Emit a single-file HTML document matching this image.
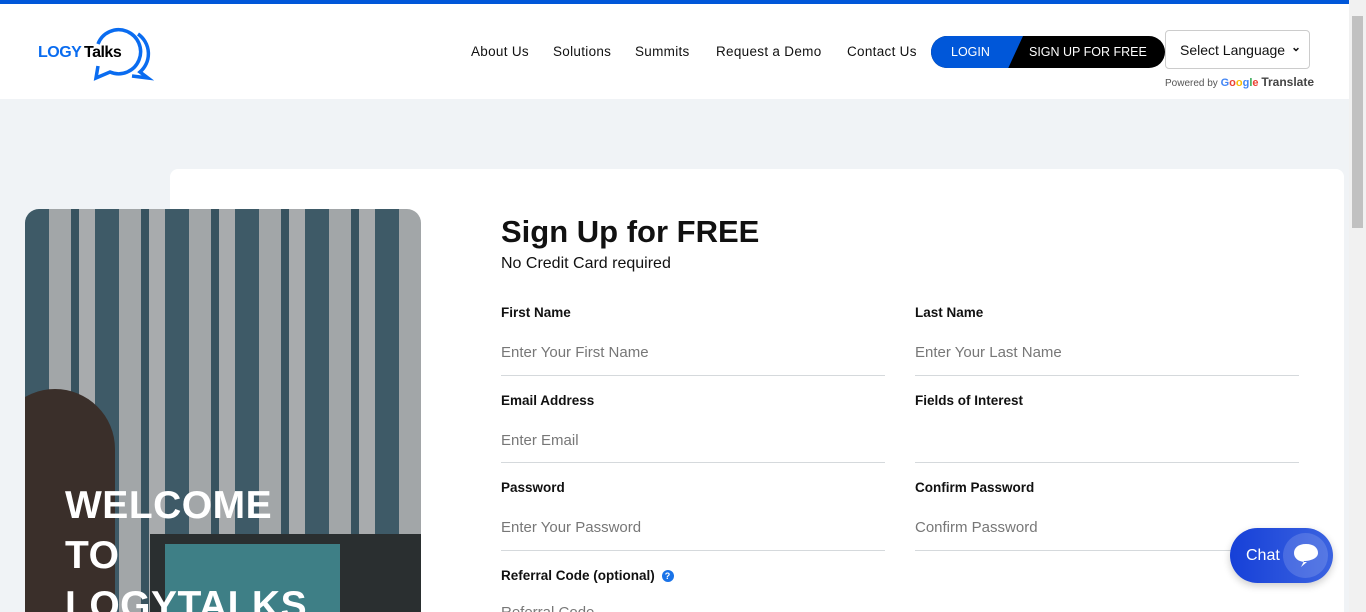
<!DOCTYPE html>
<html><head><meta charset="utf-8"><style>
*{box-sizing:border-box;margin:0;padding:0}
html,body{width:1366px;height:612px;overflow:hidden}
body{background:#f0f3f6;font-family:"Liberation Sans",sans-serif;position:relative}
.top{position:absolute;left:0;top:0;width:1349px;height:4px;background:#0057d9}
header{position:absolute;left:0;top:4px;width:1349px;height:95px;background:#fff}
.scroll{position:absolute;right:0;top:0;width:17px;height:612px;background:#f1f1f1}
.scroll div{position:absolute;left:3px;top:16px;width:11px;height:212px;background:#c1c1c1}
nav a{position:absolute;top:40px;font-size:13.5px;color:#111;text-decoration:none;letter-spacing:.3px}
.btn{position:absolute;left:931px;top:32px;width:234px;height:32px;border-radius:16px;background:#000;overflow:hidden}
.btn .l{position:absolute;left:0;top:0;width:92px;height:32px;background:#0057d9;clip-path:polygon(0 0,100% 0,84% 100%,0 100%)}
.btn span{position:absolute;top:9px;color:#fff;font-size:12.5px}
.sel{position:absolute;left:1165px;top:26px;width:145px;height:39px;border:1px solid #ccc;border-radius:4px;background:#fff;font-size:14px;padding:11px 0 0 14px;color:#111}
.pw{position:absolute;left:1165px;top:71px;font-size:10px;color:#555}
.card{position:absolute;left:170px;top:169px;width:1174px;height:443px;background:#fff;border-radius:8px 8px 0 0}
.img{position:absolute;left:25px;top:209px;width:396px;height:403px;border-radius:14px 14px 0 0;overflow:hidden;
background:repeating-linear-gradient(90deg,#3e5a67 0 24px,#a2a6a8 24px 46px,#38535f 46px 54px,#a8abad 54px 70px)}
.img .head{position:absolute;left:-30px;top:180px;width:120px;height:300px;border-radius:60px;background:#3a2f2a}
.img .mon{position:absolute;left:125px;top:325px;width:300px;height:100px;background:#2a2f30}
.img .scr{position:absolute;left:140px;top:335px;width:175px;height:80px;background:#3e7f86}
.img h1{position:absolute;left:40px;top:272px;color:#fff;font-size:39px;line-height:50px;font-weight:bold;letter-spacing:.5px}
h2{position:absolute;left:501px;top:214px;font-size:31px;font-weight:bold;color:#111}
.sub{position:absolute;left:501px;top:255px;font-size:16px;color:#111}
.lab{position:absolute;font-size:13.5px;font-weight:bold;color:#111}
.ph{position:absolute;font-size:15px;color:#777}
.ln{position:absolute;width:384px;height:1px;background:#d5d9dc}
.q{display:inline-block;width:12px;height:12px;border-radius:50%;background:#1a73e8;color:#fff;font-size:9px;text-align:center;line-height:12px;vertical-align:1px;margin-left:3px}
.chat{position:absolute;left:1230px;top:528px;width:103px;height:55px;border-radius:28px;background:linear-gradient(90deg,#1640d8,#3b63e0);box-shadow:0 3px 8px rgba(0,0,0,.2)}
.chat span{position:absolute;left:16px;top:19px;color:#fff;font-size:16px}
.chat .c{position:absolute;left:53px;top:5px;width:45px;height:45px;border-radius:50%;background:rgba(255,255,255,.15)}
</style></head><body>
<div class="top"></div>
<header>
<svg style="position:absolute;left:36px;top:18px" width="118" height="60" viewBox="0 0 118 60">
<path d="M102 12 A24 24 0 0 1 104 50 L112 56 L96 54" fill="none" stroke="#0a6cf0" stroke-width="3.5"/>
<path d="M62 22 A22 22 0 1 1 74 50 L60 56 L62 44" fill="none" stroke="#0a6cf0" stroke-width="3.5"/>
<text x="2" y="35" font-family="Liberation Sans" font-weight="bold" font-size="16" fill="#0a6cf0" letter-spacing="-0.5">LOGY</text>
<text x="48" y="35" font-family="Liberation Sans" font-weight="bold" font-size="16" fill="#000" letter-spacing="-0.5">Talks</text>
</svg>
<nav><a style="left:471px">About Us</a><a style="left:553px">Solutions</a><a style="left:635px">Summits</a><a style="left:716px">Request a Demo</a><a style="left:847px">Contact Us</a></nav>
<div class="btn"><div class="l"></div><span style="left:20px">LOGIN</span><span style="left:98px">SIGN UP FOR FREE</span></div>
<div class="sel">Select Language <span style="position:absolute;right:8px;top:9px;font-size:12px;font-weight:bold">&#8964;</span></div>
<div class="pw">Powered by <b style="color:#4285f4;font-size:11px">G<span style="color:#ea4335">o</span><span style="color:#fbbc05">o</span>g<span style="color:#34a853">l</span><span style="color:#ea4335">e</span></b> <b style="color:#444;font-size:12px">Translate</b></div>
</header>
<div class="card"></div>
<div class="img"><div class="mon"></div><div class="scr"></div><div class="head"></div><h1>WELCOME<br>TO<br>LOGYTALKS</h1></div>
<h2>Sign Up for FREE</h2>
<div class="sub">No Credit Card required</div>
<div class="lab" style="left:501px;top:305px">First Name</div>
<div class="lab" style="left:915px;top:305px">Last Name</div>
<div class="ph" style="left:501px;top:344px">Enter Your First Name</div>
<div class="ph" style="left:915px;top:344px">Enter Your Last Name</div>
<div class="ln" style="left:501px;top:375px"></div><div class="ln" style="left:915px;top:375px"></div>
<div class="lab" style="left:501px;top:393px">Email Address</div>
<div class="lab" style="left:915px;top:393px">Fields of Interest</div>
<div class="ph" style="left:501px;top:432px">Enter Email</div>
<div class="ln" style="left:501px;top:462px"></div><div class="ln" style="left:915px;top:462px"></div>
<div class="lab" style="left:501px;top:480px">Password</div>
<div class="lab" style="left:915px;top:480px">Confirm Password</div>
<div class="ph" style="left:501px;top:519px">Enter Your Password</div>
<div class="ph" style="left:915px;top:519px">Confirm Password</div>
<div class="ln" style="left:501px;top:550px"></div><div class="ln" style="left:915px;top:550px"></div>
<div class="lab" style="left:501px;top:568px">Referral Code (optional) <span class="q">?</span></div>
<div class="ph" style="left:501px;top:604px">Referral Code</div>
<div class="chat"><span>Chat</span><div class="c"></div>
<svg style="position:absolute;left:62px;top:14px" width="28" height="27" viewBox="0 0 28 27"><path d="M14 2C6 2 2 6 2 11c0 5 4 9 12 9l1 0-6 5 3-6 0 0c7 0 14-3 14-8 0-5-4-9-12-9z" fill="#fff"/></svg></div>
<div class="scroll"><div></div></div>
</body></html>
